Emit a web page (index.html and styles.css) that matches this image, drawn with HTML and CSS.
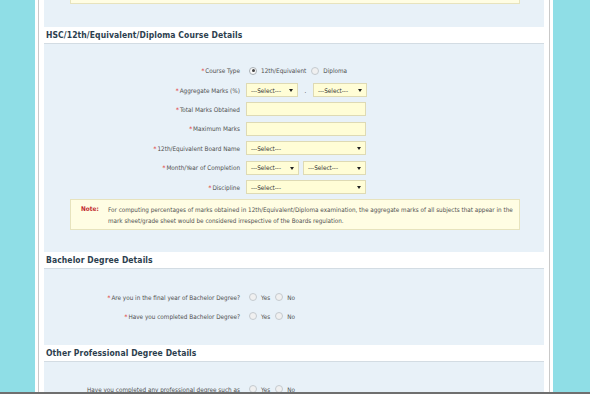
FILE: index.html
```html
<!DOCTYPE html>
<html>
<head>
    <title>Educational Details</title>
    <link rel="stylesheet" href="styles.css">
</head>
<body>
    <div class="page">
        <div class="frame">
            <div class="panel panel-top">
                <div class="note note-cut"></div>
            </div>

            <h2 class="section-title">HSC/12th/Equivalent/Diploma Course Details</h2>
            <div class="panel panel-hsc">
                <div class="form-grid">
                    <div class="label"><span class="req">*</span>Course Type</div>
                    <div class="field">
                        <span class="radio checked"></span><span class="opt">12th/Equivalent</span>
                        <span class="radio"></span><span class="opt">Diploma</span>
                    </div>

                    <div class="label"><span class="req">*</span>Aggregate Marks (%)</div>
                    <div class="field">
                        <span class="select sel-a">---Select---<i class="arrow"></i></span>
                        <span class="dot">.</span>
                        <span class="select sel-b">---Select---<i class="arrow"></i></span>
                    </div>

                    <div class="label"><span class="req">*</span>Total Marks Obtained</div>
                    <div class="field"><span class="textbox"></span></div>

                    <div class="label"><span class="req">*</span>Maximum Marks</div>
                    <div class="field"><span class="textbox"></span></div>

                    <div class="label"><span class="req">*</span>12th/Equivalent Board Name</div>
                    <div class="field"><span class="select sel-full">---Select---<i class="arrow"></i></span></div>

                    <div class="label"><span class="req">*</span>Month/Year of Completion</div>
                    <div class="field">
                        <span class="select sel-month">---Select---<i class="arrow"></i></span>
                        <span class="select sel-year">---Select---<i class="arrow"></i></span>
                    </div>

                    <div class="label"><span class="req">*</span>Discipline</div>
                    <div class="field"><span class="select sel-full">---Select---<i class="arrow"></i></span></div>
                </div>

                <div class="note">
                    <span class="note-head">Note:</span>
                    <span class="note-text">For computing percentages of marks obtained in 12th/Equivalent/Diploma examination, the aggregate marks of all subjects that appear in the mark sheet/grade sheet would be considered irrespective of the Boards regulation.</span>
                </div>
            </div>

            <h2 class="section-title">Bachelor Degree Details</h2>
            <div class="panel panel-bachelor">
                <div class="form-grid rows-tight">
                    <div class="label"><span class="req">*</span>Are you in the final year of Bachelor Degree?</div>
                    <div class="field">
                        <span class="radio"></span><span class="opt">Yes</span>
                        <span class="radio"></span><span class="opt">No</span>
                    </div>

                    <div class="label"><span class="req">*</span>Have you completed Bachelor Degree?</div>
                    <div class="field">
                        <span class="radio"></span><span class="opt">Yes</span>
                        <span class="radio"></span><span class="opt">No</span>
                    </div>
                </div>
            </div>

            <h2 class="section-title">Other Professional Degree Details</h2>
            <div class="panel panel-other">
                <div class="form-grid">
                    <div class="label">Have you completed any professional degree such as</div>
                    <div class="field">
                        <span class="radio"></span><span class="opt">Yes</span>
                        <span class="radio"></span><span class="opt">No</span>
                    </div>
                </div>
            </div>
        </div>
    </div>
    <div class="window-edge"></div>
</body>
</html>
```

FILE: styles.css
```css
body {
    margin: 0;
    background-color: #8fdee6;
    font-family: "DejaVu Sans Condensed", "Liberation Sans", sans-serif;
    font-size: 6.35px;
    color: #505050;
    overflow: hidden;
}

.page {
    margin-left: 35px;
    width: 512px;
    padding: 0 3px;
    background: #fff;
    min-height: 394px;
}

.frame {
    border-left: 1px solid #c9c9c9;
    border-right: 1px solid #c9c9c9;
    padding: 0 5px;
    min-height: 394px;
}

.panel {
    background-color: #e8f1f8;
}

.panel-top {
    height: 27px;
}

.panel-hsc {
    padding: 17px 0 22px;
}

.panel-bachelor {
    padding: 19px 0 19px;
}

.panel-other {
    padding: 18px 0 20px;
}

.section-title {
    margin: 0;
    height: 16px;
    line-height: 16px;
    padding-left: 2px;
    background: #fff;
    border-bottom: 1px solid #d3dce3;
    font-size: 8.5px;
    font-weight: bold;
    color: #2c3e4e;
    letter-spacing: 0.1px;
}

.form-grid {
    display: grid;
    grid-template-columns: 196px 1fr;
    grid-auto-rows: 19.4px;
    column-gap: 6px;
}

.rows-tight {
    grid-auto-rows: 19px;
}

.label {
    text-align: right;
    align-self: center;
    white-space: nowrap;
}

.req {
    color: #e03b3b;
    margin-right: 1px;
}

.field {
    display: flex;
    align-items: center;
}

.radio {
    width: 6px;
    height: 6px;
    border: 1px solid #c4cacf;
    border-radius: 50%;
    background: #f0f0f0;
    margin: 0 4px 0 3px;
    position: relative;
}

.radio.checked {
    background: #fafafa;
    border-color: #a9b0b6;
}

.radio.checked::after {
    content: "";
    position: absolute;
    left: 1.5px;
    top: 1.5px;
    width: 3px;
    height: 3px;
    border-radius: 50%;
    background: #444;
}

.opt {
    color: #505050;
    margin-right: 2px;
}

.textbox,
.select {
    display: inline-flex;
    align-items: center;
    box-sizing: border-box;
    height: 14px;
    background: #fffdd6;
    border: 1px solid #dedab4;
}

.textbox {
    width: 120px;
}

.select {
    position: relative;
    padding-left: 4px;
    color: #333;
}

.arrow {
    position: absolute;
    right: 4px;
    top: 5px;
    border-left: 2px solid transparent;
    border-right: 2px solid transparent;
    border-top: 3px solid #222;
}

.sel-a { width: 52px; }
.sel-b { width: 54px; }
.sel-full { width: 120px; }
.sel-month { width: 53px; margin-right: 4px; }
.sel-year { width: 63px; }

.dot {
    width: 15px;
    text-align: center;
    color: #333;
}

.note {
    display: flex;
    margin: 2px 0 0 26px;
    width: 450px;
    box-sizing: border-box;
    padding: 4px 6px 3px 10px;
    background: #fffde3;
    border: 1px solid #e7e3bd;
    font-size: 6.3px;
    line-height: 11px;
}

.note-cut {
    margin-top: 0;
    height: 4px;
    padding: 0;
    border-top: none;
}

.note-head {
    flex: 0 0 27px;
    color: #c0272d;
    font-weight: bold;
    font-size: 6.4px;
}

.note-text {
    color: #505050;
}

.window-edge {
    position: fixed;
    left: 0;
    right: 0;
    bottom: 0;
    height: 2px;
    background: #6f6f6f;
}
```
